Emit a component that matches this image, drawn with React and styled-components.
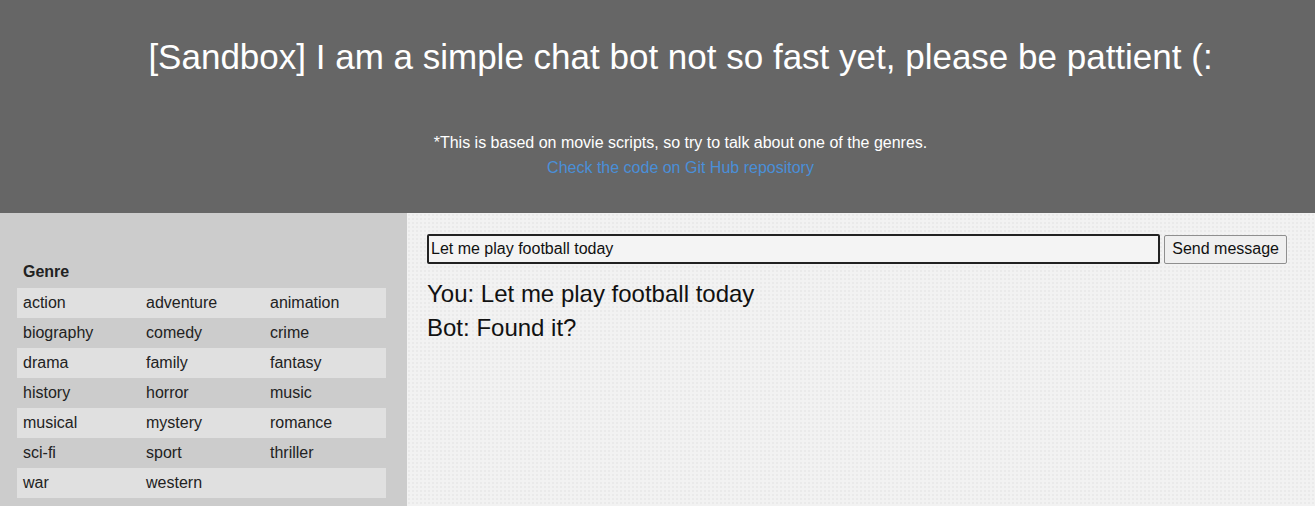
import React, { useState } from 'react'
import styled, { createGlobalStyle } from 'styled-components'

const GlobalStyle = createGlobalStyle`
  html, body {
    margin: 0;
    padding: 0;
    font-family: "Liberation Sans", Arial, sans-serif;
    background: #f2f2f2;
  }
`

const Header = styled.header`
  background: #666666;
  height: 213px;
  box-sizing: border-box;
  padding: 37px 0 0 46px;
  text-align: center;
  color: #fff;
`

const Title = styled.h1`
  margin: 0;
  font-size: 35px;
  font-weight: normal;
  line-height: 40px;
`

const Note = styled.p`
  margin: 53px 0 0;
  font-size: 16px;
  line-height: 25px;
`

const RepoLink = styled.a`
  display: block;
  font-size: 16px;
  line-height: 25px;
  color: #4a8fd8;
  text-decoration: none;
`

const Main = styled.div`
  display: grid;
  grid-template-columns: 407px 1fr;
  min-height: 293px;
`

const Sidebar = styled.aside`
  background: #cccccc;
  padding: 48px 21px 10px 17px;
`

const GenreTitle = styled.div`
  font-weight: bold;
  font-size: 16px;
  color: #222;
  padding: 0 6px 5px;
  line-height: 22px;
`

const GenreTable = styled.div`
  display: flex;
  flex-direction: column;
`

const GenreRow = styled.div`
  display: grid;
  grid-template-columns: 123px 124px 1fr;
  height: 30px;
  align-items: center;
  background: ${props => (props.$light ? '#e0e0e0' : 'transparent')};
`

const GenreCell = styled.span`
  padding-left: 6px;
  font-size: 16px;
  color: #222;
`

const Chat = styled.section`
  background-color: #f2f2f2;
  background-image: radial-gradient(rgba(0, 0, 0, 0.03) 1px, transparent 1px);
  background-size: 4px 4px;
  padding: 21px 28px 0 20px;
`

const InputRow = styled.form`
  display: flex;
  gap: 4px;
  align-items: center;
`

const MessageInput = styled.input`
  flex: 1;
  height: 30px;
  box-sizing: border-box;
  border: 2px solid #222;
  border-radius: 2px;
  background: #f4f4f4;
  padding: 0 2px;
  font-family: "Liberation Sans", Arial, sans-serif;
  font-size: 16px;
  color: #111;
  outline: none;
`

const SendButton = styled.button`
  height: 29px;
  padding: 0 7px;
  border: 1px solid #8f8f8f;
  border-radius: 2px;
  background: #efefef;
  font-family: "Liberation Sans", Arial, sans-serif;
  font-size: 16px;
  color: #111;
`

const Messages = styled.div`
  margin-top: 13px;
`

const Message = styled.div`
  font-size: 24px;
  line-height: 34px;
  color: #111;
`

const genres = [
  ['action', 'adventure', 'animation'],
  ['biography', 'comedy', 'crime'],
  ['drama', 'family', 'fantasy'],
  ['history', 'horror', 'music'],
  ['musical', 'mystery', 'romance'],
  ['sci-fi', 'sport', 'thriller'],
  ['war', 'western', '']
]

const App = () => {
  const [text, setText] = useState('Let me play football today')
  const messages = [
    { from: 'You', text: 'Let me play football today' },
    { from: 'Bot', text: 'Found it?' }
  ]

  return (
    <>
      <GlobalStyle />
      <Header>
        <Title>[Sandbox] I am a simple chat bot not so fast yet, please be pattient (:</Title>
        <Note>*This is based on movie scripts, so try to talk about one of the genres.</Note>
        <RepoLink href="#">Check the code on Git Hub repository</RepoLink>
      </Header>
      <Main>
        <Sidebar>
          <GenreTitle>Genre</GenreTitle>
          <GenreTable>
            {genres.map((row, i) => (
              <GenreRow key={i} $light={i % 2 === 0}>
                {row.map((g, j) => (
                  <GenreCell key={j}>{g}</GenreCell>
                ))}
              </GenreRow>
            ))}
          </GenreTable>
        </Sidebar>
        <Chat>
          <InputRow onSubmit={(e) => { e.preventDefault() }}>
            <MessageInput value={text} onChange={(e) => { setText(e.target.value) }} />
            <SendButton type="submit">Send message</SendButton>
          </InputRow>
          <Messages>
            {messages.map((m, i) => (
              <Message key={i}>{m.from}: {m.text}</Message>
            ))}
          </Messages>
        </Chat>
      </Main>
    </>
  )
}

export default App
